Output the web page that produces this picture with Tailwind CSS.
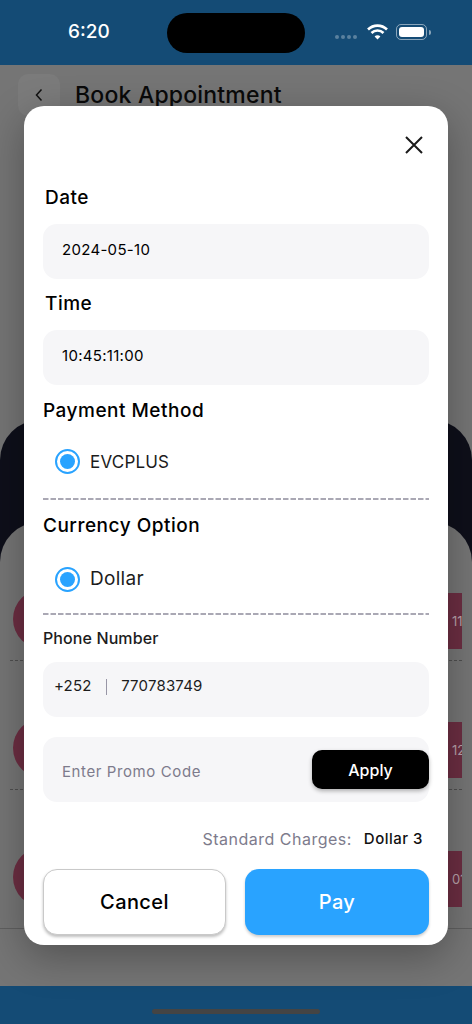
<!DOCTYPE html>
<html lang="en">
<head>
    <meta charset="UTF-8">
    <meta name="viewport" content="width=device-width, initial-scale=1.0">
    <title>Book Appointment</title>
    <script src="https://cdn.jsdelivr.net/npm/@tailwindcss/browser@4"></script>
</head>
<body class="font-['Inter','Liberation_Sans',sans-serif] bg-[#757575]">
    <div class="relative w-[472px] h-[1024px] overflow-hidden flex flex-col bg-[#757575]">
        <!-- status bar -->
        <div class="h-[65px] shrink-0 bg-[#144b75] relative flex items-center text-white">
            <span class="ml-[68px] mb-[1px] text-[19px] font-medium">6:20</span>
            <div class="absolute left-[167px] top-[13px] w-[138px] h-[40px] rounded-[20px] bg-black"></div>
            <div class="absolute left-[335px] top-[35px] flex gap-[2px]">
                <span class="w-[4px] h-[4px] rounded-full bg-white/30"></span>
                <span class="w-[4px] h-[4px] rounded-full bg-white/30"></span>
                <span class="w-[4px] h-[4px] rounded-full bg-white/30"></span>
                <span class="w-[4px] h-[4px] rounded-full bg-white/30"></span>
            </div>
            <svg class="absolute left-[367px] top-[24px]" width="21" height="16" viewBox="0 0 21 16" fill="none" stroke="white" stroke-width="2.6">
                <path d="M1 5.5a13.5 13.5 0 0 1 19 0"/>
                <path d="M4.5 9a8.5 8.5 0 0 1 12 0"/>
                <path d="M10.5 15.5 7.6 12.4a4 4 0 0 1 5.8 0z" fill="white" stroke="none"/>
            </svg>
            <div class="absolute left-[396px] top-[24px] w-[31px] h-[16px] rounded-[5px] border border-white/50 p-[2px]">
                <div class="w-full h-full rounded-[3px] bg-white"></div>
            </div>
            <div class="absolute left-[429px] top-[30px] w-[1.5px] h-[5px] rounded-r bg-white/50"></div>
        </div>

        <!-- page behind the modal -->
        <div class="flex-1 flex flex-col relative overflow-hidden">
            <div class="flex items-start gap-[15px] pl-[18px] pt-[9px] h-[355px]">
                <div class="w-[42px] h-[42px] rounded-[10px] bg-[#7b7b7b] flex items-center justify-center">
                    <svg width="10" height="14" viewBox="0 0 10 14" fill="none" stroke="#111" stroke-width="1.5"><path d="M7.5 1.5 2.5 7l5 5.5"/></svg>
                </div>
                <h1 class="mt-[1px] text-[23px] tracking-[0.2px] leading-[40px] font-medium text-[#0a0a0a]">Book Appointment</h1>
            </div>
            <div class="h-[566px] rounded-t-[40px] bg-[#0e0f1a] pt-[102px] flex flex-col">
                <div class="flex-1 rounded-t-[40px] bg-[#757575] flex flex-col pt-[71px] pl-[13px] pr-[10px]">
                    <div class="h-[129px] flex justify-between items-start">
                        <div class="w-[60px] h-[60px] -mt-[4px] rounded-full bg-[#6c2e42]"></div>
                        <div class="w-[14px] h-[56px] bg-[#6c2e42] text-[#b9a3aa] text-[13px] leading-[56px] pl-[4px] overflow-hidden">11</div>
                    </div>
                    <div class="h-[129px] flex justify-between items-start">
                        <div class="w-[60px] h-[60px] -mt-[4px] rounded-full bg-[#6c2e42]"></div>
                        <div class="w-[14px] h-[56px] bg-[#6c2e42] text-[#b9a3aa] text-[13px] leading-[56px] pl-[4px] overflow-hidden">12</div>
                    </div>
                    <div class="flex justify-between items-start">
                        <div class="w-[60px] h-[60px] -mt-[4px] rounded-full bg-[#6c2e42]"></div>
                        <div class="w-[14px] h-[56px] bg-[#6c2e42] text-[#b9a3aa] text-[13px] leading-[56px] pl-[4px] overflow-hidden">01</div>
                    </div>
                    <div class="mt-auto mb-[57px] -ml-[13px] -mr-[10px] h-[1px] bg-[#5f5f5f]"></div>
                </div>
            </div>
            <!-- row separators peeking out beside the modal -->
            <div class="absolute left-[10px] right-[10px] top-[595px] border-t border-dashed border-[#4f4f4f]"></div>
            <div class="absolute left-[10px] right-[10px] top-[724px] border-t border-dashed border-[#4f4f4f]"></div>
        </div>

        <!-- bottom bar -->
        <div class="h-[38px] shrink-0 bg-[#144b75] relative">
            <div class="absolute left-[152px] top-[23px] w-[168px] h-[5px] rounded-full bg-[#444]"></div>
        </div>

        <!-- modal -->
        <div class="absolute left-[24px] top-[106px] w-[424px] h-[839px] rounded-[20px] bg-white shadow-[0_12px_40px_rgba(0,0,0,0.3)] px-[19px] flex flex-col text-black">
            <div class="flex justify-end pt-[30px] pr-[6px]">
                <svg width="18" height="18" viewBox="0 0 18 18" fill="none" stroke="#1a1a1a" stroke-width="2"><path d="M1 1l16 16M17 1 1 17"/></svg>
            </div>
            <p class="mt-[30px] ml-[2px] text-[19px] tracking-[0.5px] leading-[28px] font-medium">Date</p>
            <div class="mt-[12px] h-[55px] pb-[2px] rounded-[14px] bg-[#f6f6f8] flex items-center pl-[19px] text-[15px] tracking-[0.3px]">2024-05-10</div>
            <p class="mt-[11px] ml-[2px] text-[19px] tracking-[0.5px] leading-[28px] font-medium">Time</p>
            <div class="mt-[12px] h-[55px] pb-[2px] rounded-[14px] bg-[#f6f6f8] flex items-center pl-[19px] text-[15px] tracking-[0.3px]">10:45:11:00</div>
            <p class="mt-[12px] text-[19px] tracking-[0.5px] leading-[28px] font-medium">Payment Method</p>
            <div class="mt-[24px] h-[25px] flex items-center pl-[12px] gap-[10px]">
                <span class="w-[25px] h-[25px] rounded-full border-2 border-[#29a3ff] flex items-center justify-center"><span class="w-[15px] h-[15px] rounded-full bg-[#29a3ff]"></span></span>
                <span class="mt-[2px] text-[17px] tracking-[0.2px] text-[#1c1c1c]">EVCPLUS</span>
            </div>
            <svg class="mt-[24px] block" width="386" height="2"><line x1="0" y1="1" x2="386" y2="1" stroke="#8e8c9c" stroke-width="1.5" stroke-dasharray="5.5 2"/></svg>
            <p class="mt-[12px] text-[19px] tracking-[0.5px] leading-[28px] font-medium">Currency Option</p>
            <div class="mt-[27px] h-[25px] flex items-center pl-[12px] gap-[10px]">
                <span class="w-[25px] h-[25px] rounded-full border-2 border-[#29a3ff] flex items-center justify-center"><span class="w-[15px] h-[15px] rounded-full bg-[#29a3ff]"></span></span>
                <span class="text-[19px] tracking-[0.3px] text-[#1c1c1c]">Dollar</span>
            </div>
            <svg class="mt-[21px] block" width="386" height="2"><line x1="0" y1="1" x2="386" y2="1" stroke="#8e8c9c" stroke-width="1.5" stroke-dasharray="5.5 2"/></svg>
            <p class="mt-[12px] text-[16px] tracking-[0.1px] leading-[22px] font-medium text-[#1c1c1c]">Phone Number</p>
            <div class="mt-[13px] h-[55px] pb-[6px] rounded-[14px] bg-[#f6f6f8] flex items-center pl-[11px] text-[15px] tracking-[0.2px] text-[#1c1c1c]">
                <span>+252</span>
                <span class="ml-[14px] mr-[14px] w-[1.5px] h-[16px] bg-[#9896a6]"></span>
                <span>770783749</span>
            </div>
            <div class="mt-[20px] h-[65px] rounded-[14px] bg-[#f6f6f8] flex items-center justify-between pl-[19px]">
                <span class="mt-[5px] text-[15px] tracking-[0.6px] text-[#7d7b8c]">Enter Promo Code</span>
                <button class="w-[117px] h-[39px] rounded-[10px] bg-black text-white text-[16px] font-medium shadow-[0_2px_4px_rgba(0,0,0,0.3)]">Apply</button>
            </div>
            <div class="mt-[26px] h-[22px] flex justify-end items-center pr-[6px] gap-[12px]">
                <span class="text-[16px] tracking-[0.5px] text-[#7d7b8c]">Standard Charges:</span>
                <span class="text-[15px] tracking-[0.5px] font-medium text-[#111]">Dollar 3</span>
            </div>
            <div class="mt-[19px] flex justify-between">
                <button class="w-[183px] h-[66px] rounded-[14px] bg-white border border-[#c9c9c9] text-[20px] tracking-[0.4px] font-[450] shadow-[0_2px_3px_rgba(0,0,0,0.25)]">Cancel</button>
                <button class="w-[184px] h-[66px] rounded-[14px] bg-[#29a3ff] text-white text-[20px] tracking-[0.4px] font-[450] shadow-[0_2px_3px_rgba(0,0,0,0.2)]">Pay</button>
            </div>
        </div>
    </div>
</body>
</html>
